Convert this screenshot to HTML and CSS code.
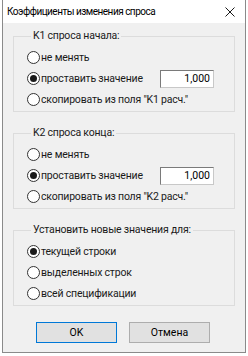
FILE: index.html
```html
<!DOCTYPE html>
<html lang="ru">
<head>
  <meta charset="UTF-8" />
  <title>Коэффициенты изменения спроса</title>
  <link rel="stylesheet" href="styles.css">
</head>
<body>
  <div class="window">
    <div class="titlebar">
      <span class="title">Коэффициенты изменения спроса</span>
      <svg class="close" width="10" height="10" viewBox="0 0 10 10">
        <path d="M0.5 0.5 L9.5 9.5 M9.5 0.5 L0.5 9.5" stroke="#1a1a1a" stroke-width="1" fill="none"/>
      </svg>
    </div>

    <div class="content">
      <!-- K1 -->
      <fieldset class="group">
        <legend>K1 спроса начала:</legend>
        <div class="opt"><span class="radio"></span>не менять</div>
        <div class="opt"><span class="radio checked"></span>проставить значение<input class="value" type="text" value="1,000"></div>
        <div class="opt"><span class="radio"></span>скопировать из поля "K1 расч."</div>
      </fieldset>

      <!-- K2 -->
      <fieldset class="group">
        <legend>K2 спроса конца:</legend>
        <div class="opt"><span class="radio"></span>не менять</div>
        <div class="opt"><span class="radio checked"></span>проставить значение<input class="value" type="text" value="1,000"></div>
        <div class="opt"><span class="radio"></span>скопировать из поля "K2 расч."</div>
      </fieldset>

      <fieldset class="group">
        <legend>Установить новые значения для:</legend>
        <div class="opt"><span class="radio checked"></span>текущей строки</div>
        <div class="opt"><span class="radio"></span>выделенных строк</div>
        <div class="opt"><span class="radio"></span>всей спецификации</div>
      </fieldset>

      <div class="buttons">
        <button class="btn default">OK</button>
        <button class="btn">Отмена</button>
      </div>
    </div>
  </div>
</body>
</html>
```

FILE: styles.css
```css
body {
  margin: 0;
  background: #fff;
  font-family: Roboto, "Liberation Sans", sans-serif;
  font-size: 10.5px;
  letter-spacing: -0.2px;
  color: #1a1a1a;
}
.window {
  margin-left: 2px;
  width: 242px;
  border: 1px solid #8a8a8a;
  border-top: none;
  background: #f0f0f0;
}
.titlebar {
  height: 23px;
  background: #fff;
  display: flex;
  align-items: center;
  justify-content: space-between;
  padding: 0 10px 0 4px;
}
.title {
  font-size: 10px;
  letter-spacing: -0.5px;
  color: #000;
}
.content {
  padding: 6px 0 9px;
  display: flex;
  flex-direction: column;
  gap: 14px;
}
.group {
  margin: 0 10px;
  padding: 4px 0 1px 13px;
  border: 1px solid #dcdcdc;
  height: 83px;
  box-sizing: border-box;
}
.group legend {
  margin-left: 4px;
  padding: 0 2px;
  line-height: 14px;
}
.opt {
  height: 21px;
  display: flex;
  align-items: center;
}
.radio {
  width: 13px;
  height: 13px;
  box-sizing: border-box;
  border: 1px solid #333;
  border-radius: 50%;
  background: #fff;
  margin-right: 1px;
  display: flex;
  align-items: center;
  justify-content: center;
}
.radio.checked::after {
  content: "";
  width: 7px;
  height: 7px;
  border-radius: 50%;
  background: #1a1a1a;
}
.value {
  margin-left: auto;
  margin-right: 20px;
  width: 54px;
  height: 18px;
  box-sizing: border-box;
  border: 1px solid #7a7a7a;
  border-right-color: #c8c8c8;
  border-bottom-color: #c8c8c8;
  padding: 0 3px;
  text-align: right;
  font: inherit;
  background: #fff;
}
.buttons {
  display: flex;
  gap: 12px;
  padding-left: 33px;
  margin-top: 2px;
}
.btn {
  width: 81px;
  height: 21px;
  border: 1px solid #adadad;
  background: #e1e1e1;
  font: inherit;
  color: #000;
  padding: 0;
}
.btn.default {
  border-color: #0078d7;
}
```
